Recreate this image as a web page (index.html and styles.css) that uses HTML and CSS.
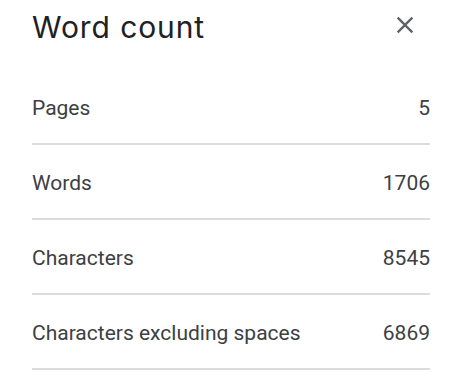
FILE: index.html
```html
<!DOCTYPE html>
<html lang="en">
<head>
    <meta charset="UTF-8">
    <title>Word count</title>
    <link rel="stylesheet" href="styles.css">
</head>
<body>

<div class="dialog">
    <div class="dialog-header">
        <h1 class="dialog-title">Word count</h1>
        <button class="close-btn" aria-label="Close">
            <svg width="28" height="28" viewBox="0 0 24 24">
                <path d="M19 6.41L17.59 5 12 10.59 6.41 5 5 6.41 10.59 12 5 17.59 6.41 19 12 13.41 17.59 19 19 17.59 13.41 12z" fill="#5f6368"/>
            </svg>
        </button>
    </div>

    <!-- counts -->
    <div class="count-row"><span>Pages</span><span>5</span></div>
    <div class="count-row"><span>Words</span><span>1706</span></div>
    <div class="count-row"><span>Characters</span><span>8545</span></div>
    <div class="count-row"><span>Characters excluding spaces</span><span>6869</span></div>
</div>

</body>
</html>
```

FILE: styles.css
```css
body {
    margin: 0;
    background: #fff;
    font-family: Roboto, Arial, sans-serif;
}
.dialog {
    width: 398px;
    padding-left: 32px;
}
.dialog-header {
    height: 70px;
    display: flex;
    justify-content: space-between;
    align-items: flex-start;
}
.dialog-title {
    margin: 9px 0 0 0;
    font-family: Inter, sans-serif;
    font-weight: 400;
    font-size: 30px;
    line-height: 36px;
    letter-spacing: 0.9px;
    color: #202124;
}
.close-btn {
    display: block;
    margin: 11px 11px 0 0;
    width: 28px;
    height: 28px;
    padding: 0;
    border: none;
    background: none;
    cursor: pointer;
}
.close-btn svg {
    display: block;
}
.count-row {
    height: 71px;
    padding-top: 2px;
    display: flex;
    justify-content: space-between;
    align-items: center;
    border-bottom: 2px solid #dadce0;
    font-size: 21px;
    line-height: 24px;
    color: #3c4043;
}
```
